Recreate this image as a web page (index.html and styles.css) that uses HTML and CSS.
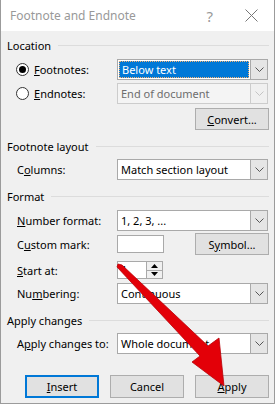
FILE: index.html
```html
<!DOCTYPE html>
<html lang="en">
  <head>
    <meta charset="UTF-8" />
    <meta name="viewport" content="width=device-width, initial-scale=1.0" />
    <title>Footnote and Endnote</title>
    <link rel="stylesheet" href="styles.css">
  </head>
  <body>
    <div class="dialog">
      <div class="titlebar">
        <span class="title">Footnote and Endnote</span>
        <span class="help">?</span>
        <svg class="close" width="13" height="13" viewBox="0 0 13 13">
          <path d="M0.5 0.5 L12.5 12.5 M12.5 0.5 L0.5 12.5" stroke="#777" stroke-width="1" fill="none" />
        </svg>
      </div>

      <div class="content">
        <div class="group-head"><span>Location</span></div>

        <div class="row mt6">
          <label class="label radio-label"><span class="radio checked"></span><span><u>F</u>ootnotes:</span></label>
          <div class="select">
            <div class="field focus"><span class="hl">Below text</span></div>
            <div class="arrow"><svg width="9" height="5" viewBox="0 0 9 5"><polyline points="0.5,0.5 4.5,4.5 8.5,0.5" fill="none" stroke="#555" /></svg></div>
          </div>
        </div>

        <div class="row mt3">
          <label class="label radio-label"><span class="radio"></span><span><u>E</u>ndnotes:</span></label>
          <div class="select disabled">
            <div class="field">End of document</div>
            <div class="arrow"><svg width="9" height="5" viewBox="0 0 9 5"><polyline points="0.5,0.5 4.5,4.5 8.5,0.5" fill="none" stroke="#c4c4c4" /></svg></div>
          </div>
        </div>

        <div class="row tall mt4 end">
          <button class="btn"><u>C</u>onvert...</button>
        </div>

        <div class="group-head mt8"><span>Footnote layout</span></div>

        <div class="row mt5">
          <span class="label">C<u>o</u>lumns:</span>
          <div class="select">
            <div class="field">Match section layout</div>
            <div class="arrow"><svg width="9" height="5" viewBox="0 0 9 5"><polyline points="0.5,0.5 4.5,4.5 8.5,0.5" fill="none" stroke="#555" /></svg></div>
          </div>
        </div>

        <div class="group-head mt8"><span>Format</span></div>

        <div class="row mt6">
          <span class="label"><u>N</u>umber format:</span>
          <div class="select">
            <div class="field">1, 2, 3, ...</div>
            <div class="arrow"><svg width="9" height="5" viewBox="0 0 9 5"><polyline points="0.5,0.5 4.5,4.5 8.5,0.5" fill="none" stroke="#555" /></svg></div>
          </div>
        </div>

        <div class="row tall mt2">
          <span class="label">C<u>u</u>stom mark:</span>
          <div class="textbox"></div>
          <button class="btn push">S<u>y</u>mbol...</button>
        </div>

        <div class="row short mt6">
          <span class="label"><u>S</u>tart at:</span>
          <div class="spin">
            <span class="spin-val">1</span>
            <div class="spin-btns">
              <span class="spin-up"><svg width="7" height="4" viewBox="0 0 7 4"><polygon points="3.5,0 7,4 0,4" fill="#000" /></svg></span>
              <span class="spin-down"><svg width="7" height="4" viewBox="0 0 7 4"><polygon points="0,0 7,0 3.5,4" fill="#000" /></svg></span>
            </div>
          </div>
        </div>

        <div class="row mt4">
          <span class="label">Nu<u>m</u>bering:</span>
          <div class="select">
            <div class="field">Continuous</div>
            <div class="arrow"><svg width="9" height="5" viewBox="0 0 9 5"><polyline points="0.5,0.5 4.5,4.5 8.5,0.5" fill="none" stroke="#555" /></svg></div>
          </div>
        </div>

        <div class="group-head mt8"><span>Apply changes</span></div>

        <div class="row mt5">
          <span class="label">A<u>p</u>ply changes to:</span>
          <div class="select">
            <div class="field">Whole document</div>
            <div class="arrow"><svg width="9" height="5" viewBox="0 0 9 5"><polyline points="0.5,0.5 4.5,4.5 8.5,0.5" fill="none" stroke="#555" /></svg></div>
          </div>
        </div>

        <div class="buttons">
          <button class="btn default"><u>I</u>nsert</button>
          <button class="btn">Cancel</button>
          <button class="btn"><u>A</u>pply</button>
        </div>
      </div>

      <!-- red callout arrow drawn over the dialog -->
      <svg class="pointer" width="275" height="404" viewBox="0 0 275 404">
        <polygon points="118,264 122,265 208,346 219,338 224,386 192,362 200,356 117,267"
                 fill="#e30008" stroke="#b80006" stroke-width="0.8" stroke-linejoin="round" />
      </svg>
    </div>
  </body>
</html>
```

FILE: styles.css
```css
body {
  margin: 0;
  background: #fff;
}
.dialog {
  position: relative;
  width: 275px;
  height: 404px;
  box-sizing: border-box;
  border: 1px solid #9b9b9b;
  border-top: none;
  background: #f0f0f0;
  font-family: "Segoe UI", "Noto Sans", sans-serif;
  font-size: 11px;
  color: #000;
}
.titlebar {
  height: 31px;
  background: #fff;
  display: flex;
  align-items: center;
  padding: 0 16px 0 9px;
}
.title {
  flex: 1;
  font-size: 12px;
  color: #999;
}
.help {
  font-size: 15px;
  color: #999;
  margin-right: 32px;
}
.content {
  padding: 6px 5px 0 6px;
}
.group-head {
  display: flex;
  align-items: center;
  gap: 7px;
  height: 16px;
}
.group-head::after {
  content: "";
  flex: 1;
  border-top: 1px solid #dcdcdc;
}
.row {
  display: flex;
  align-items: center;
  height: 21px;
}
.row.tall {
  height: 22px;
}
.row.short {
  height: 18px;
}
.row.end {
  justify-content: flex-end;
}
.mt2 { margin-top: 2px; }
.mt3 { margin-top: 3px; }
.mt4 { margin-top: 4px; }
.mt5 { margin-top: 5px; }
.mt6 { margin-top: 6px; }
.mt8 { margin-top: 8px; }

.label {
  width: 110px;
  flex: none;
  padding-left: 10px;
  box-sizing: border-box;
}
.radio-label {
  display: flex;
  align-items: center;
  gap: 5px;
  padding-left: 9px;
}
.radio {
  width: 13px;
  height: 13px;
  box-sizing: border-box;
  border: 1px solid #333;
  border-radius: 50%;
  background: #fff;
  display: flex;
  align-items: center;
  justify-content: center;
}
.radio.checked::after {
  content: "";
  width: 7px;
  height: 7px;
  border-radius: 50%;
  background: #000;
}
.select {
  width: 151px;
  height: 21px;
  display: flex;
}
.field {
  flex: 1;
  border: 1px solid #a9a9a9;
  background: #fff;
  padding-left: 3px;
  display: flex;
  align-items: center;
  white-space: nowrap;
}
.field.focus {
  padding: 1px;
}
.hl {
  flex: 1;
  align-self: stretch;
  display: flex;
  align-items: center;
  padding-left: 2px;
  background: #0078d7;
  color: #fff;
  border: 1px dotted #f3b071;
}
.arrow {
  width: 16px;
  border: 1px solid #a9a9a9;
  border-left: none;
  background: #e5e5e5;
  display: flex;
  align-items: center;
  justify-content: center;
}
.select.disabled .field {
  background: #f4f4f4;
  border-color: #cccccc;
  color: #6d6d6d;
}
.select.disabled .arrow {
  background: #f0f0f0;
  border-color: #cccccc;
}
.textbox {
  width: 47px;
  height: 18px;
  box-sizing: border-box;
  border: 1px solid #a9a9a9;
  background: #fff;
}
.btn {
  width: 74px;
  height: 22px;
  box-sizing: border-box;
  border: 1px solid #adadad;
  background: #e1e1e1;
  font: inherit;
  color: #000;
  padding: 0;
}
.btn.push {
  margin-left: auto;
}
.btn.default {
  border: 2px solid #0078d7;
}
.spin {
  width: 46px;
  height: 18px;
  box-sizing: border-box;
  border: 1px solid #a9a9a9;
  background: #fff;
  display: flex;
}
.spin-val {
  flex: 1;
  padding-left: 3px;
  line-height: 16px;
}
.spin-btns {
  width: 15px;
  display: flex;
  flex-direction: column;
  border-left: 1px solid #a9a9a9;
}
.spin-up,
.spin-down {
  flex: 1;
  display: flex;
  align-items: center;
  justify-content: center;
  background: #f0f0f0;
}
.spin-up {
  border-bottom: 1px solid #a9a9a9;
}
.buttons {
  display: flex;
  justify-content: flex-end;
  gap: 11px;
  margin-top: 21px;
}
.buttons .btn {
  height: 23px;
}
.pointer {
  position: absolute;
  left: -1px;
  top: 0;
  pointer-events: none;
}
```
